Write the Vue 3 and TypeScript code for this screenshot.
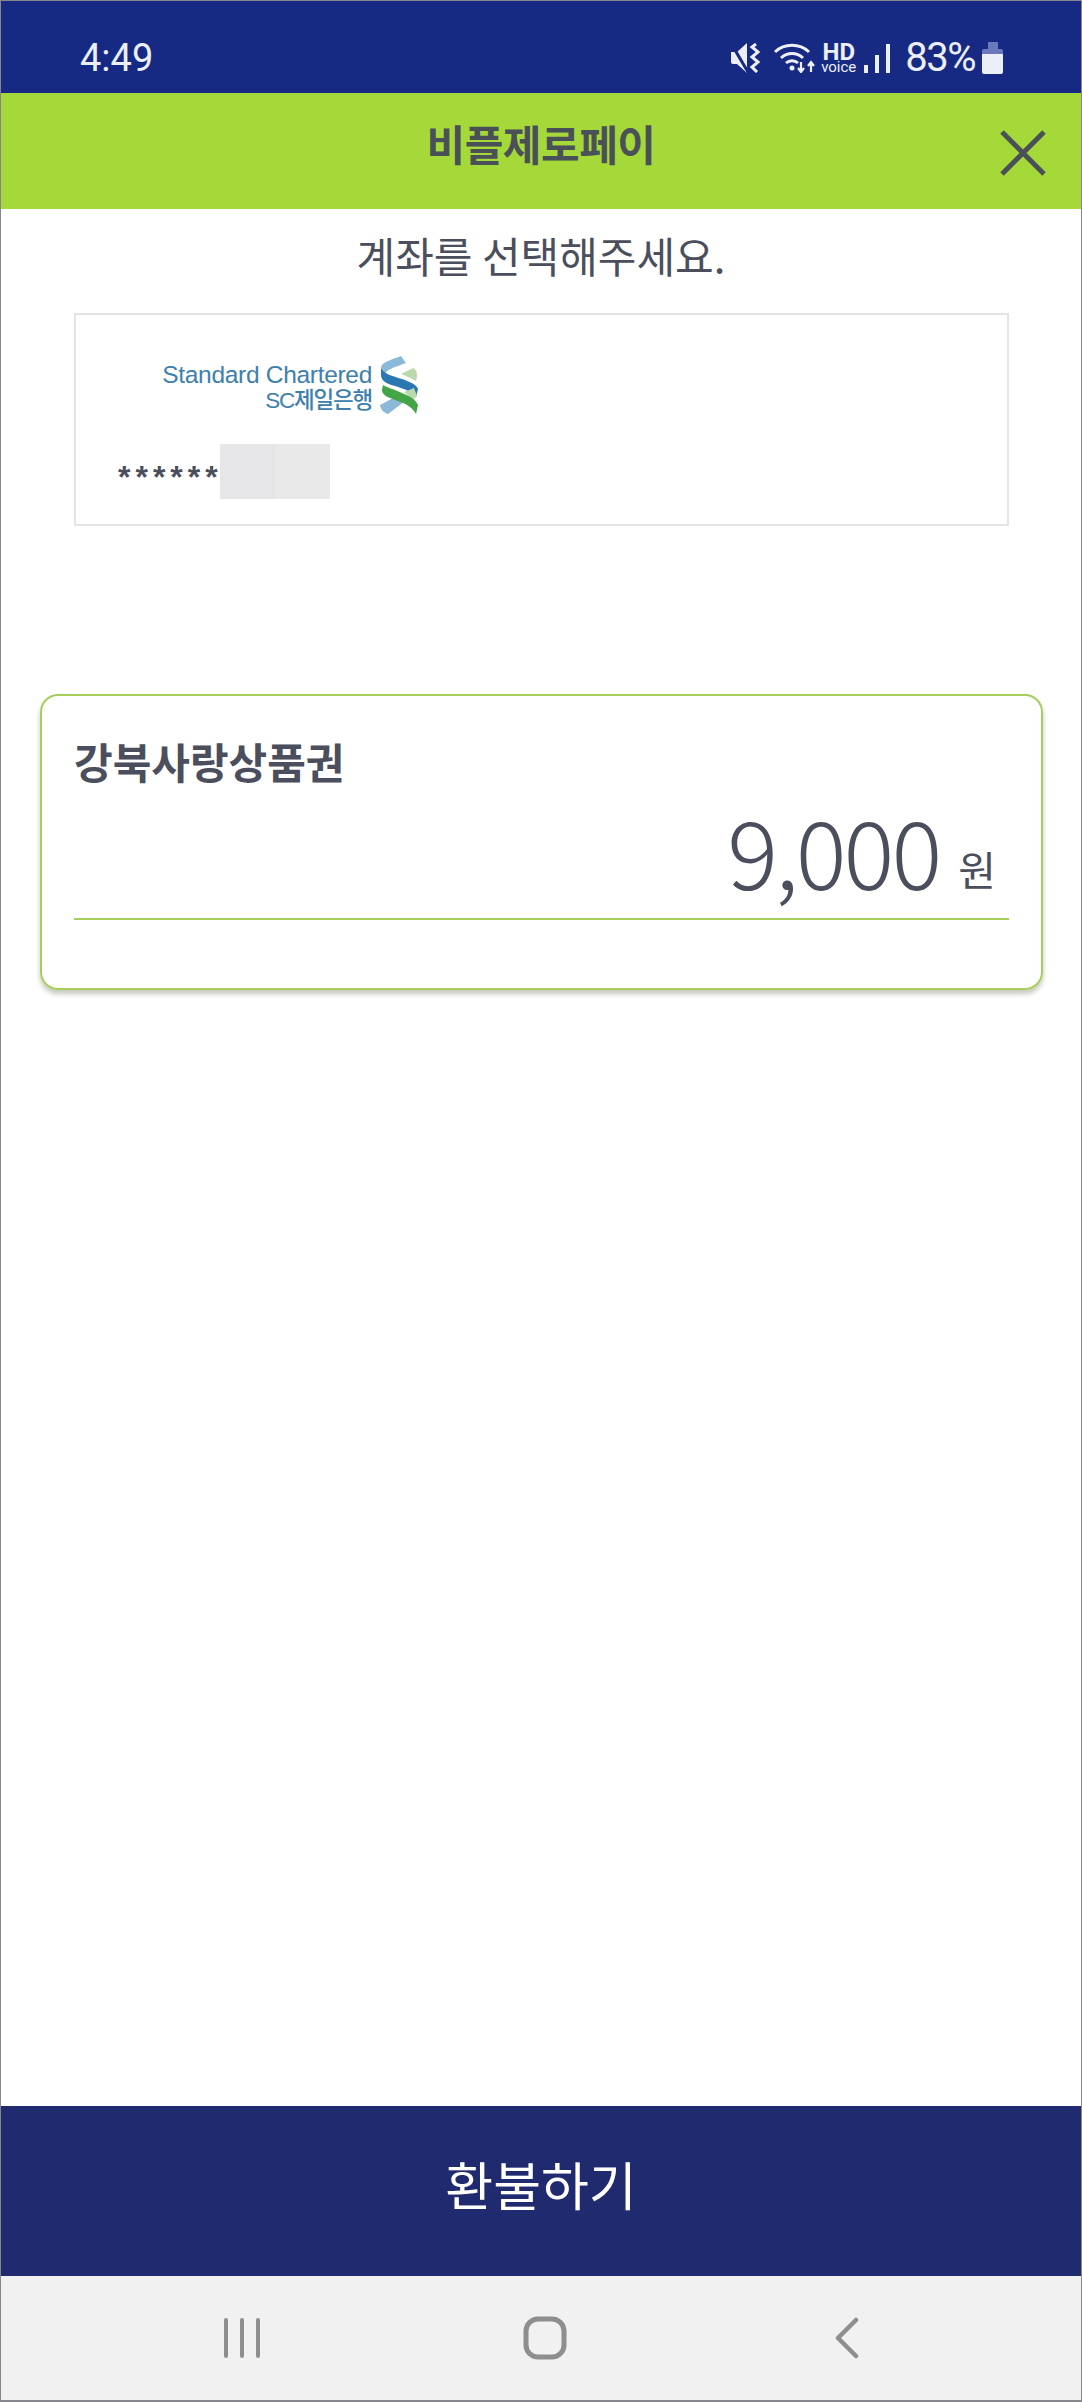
<script setup lang="ts">
const title = '비플제로페이'
const amount = '9,000'
</script>

<template>
  <div class="screen">
    <div class="status">
      <span class="clock">4:49</span>
      <div class="status-right">
        <svg class="ic-mute" width="32" height="30" viewBox="0 0 32 30">
          <path d="M0 9h6l10-9v30L6 21H2a2 2 0 0 1-2-2z" fill="#eceef8" />
          <path d="M1 2l16 27" stroke="#162a84" stroke-width="3" />
          <path d="M25 1l-4 3 6 5-6 5 6 5-6 5 5 5" fill="none" stroke="#eceef8" stroke-width="3" />
        </svg>
        <svg class="ic-wifi" width="42" height="30" viewBox="0 0 42 30">
          <path d="M1 9a25 25 0 0 1 34 0M7 15a16 16 0 0 1 22 0M12 20a9 9 0 0 1 12 0" fill="none" stroke="#eceef8" stroke-width="3" />
          <circle cx="18" cy="25" r="2.5" fill="#eceef8" />
          <path d="M27 19v9M24 25l3 4 3-4M37 29v-9M34 23l3-4 3 4" fill="none" stroke="#eceef8" stroke-width="2.2" />
        </svg>
        <div class="hd"><b>HD</b><span>voice</span></div>
        <div class="bars"><i class="b1"></i><i class="b2"></i><i class="b3"></i></div>
        <span class="pct">83%</span>
        <div class="batt"><i class="cap"></i><i class="body"></i></div>
      </div>
    </div>

    <header class="topbar">
      <h1>{{ title }}</h1>
      <svg class="close" width="46" height="46" viewBox="0 0 46 46">
        <path d="M2 2l42 42M44 2L2 44" stroke="#4a5058" stroke-width="5" fill="none" />
      </svg>
    </header>

    <main class="content">
      <p class="prompt">계좌를 선택해주세요.</p>

      <div class="account">
        <div class="logo">
          <div class="logo-text">
            <span class="en">Standard Chartered</span>
            <span class="ko">SC제일은행</span>
          </div>
          <svg width="38" height="58" viewBox="0 0 38 58">
            <path d="M21 0l5 7C18 10 10 12 5 17 2 14 0 12 2 9 5 5 14 3 21 0z" fill="#8db9d8" />
            <path d="M21 18l12-6c4 2 5 6 3 13-5-3-10-5-15-7z" fill="#bcd9ae" />
            <path d="M1 12c3 6 11 8 21 11 8 3 14 5 16 10l-2 8c-4-6-12-8-21-11C8 28 2 26 1 20z" fill="#2a77b2" />
            <path d="M24 36l10-4 3 8-4 4z" fill="#bcd9ae" />
            <path d="M0 49l15-8 9 5c-6 4-12 9-16 12-4-1-8-5-8-9z" fill="#8db9d8" />
            <path d="M3 29c5 3 11 4 19 8 8 3 14 7 16 12l-2 9c-4-7-10-10-18-13C10 42 2 40 2 34z" fill="#43a547" />
          </svg>
        </div>
        <div class="acct-no">
          <span class="stars">******</span>
          <i class="mask m1"></i><i class="mask m2"></i>
        </div>
      </div>

      <section class="card">
        <h2>강북사랑상품권</h2>
        <div class="amount-row">
          <span class="amount">{{ amount }}</span>
          <span class="unit">원</span>
        </div>
        <div class="rule"></div>
      </section>
    </main>

    <button class="refund">환불하기</button>

    <nav class="navbar">
      <svg width="40" height="40" viewBox="0 0 40 40">
        <path d="M3 2v36M19 2v36M35 2v36" stroke="#8e8e8e" stroke-width="4" stroke-linecap="round" />
      </svg>
      <svg width="44" height="44" viewBox="0 0 44 44">
        <rect x="3" y="3" width="38" height="38" rx="12" fill="none" stroke="#8e8e8e" stroke-width="5" />
      </svg>
      <svg width="28" height="42" viewBox="0 0 28 42">
        <path d="M23 3L5 21l18 18" fill="none" stroke="#8e8e8e" stroke-width="4.5" stroke-linecap="round" stroke-linejoin="round" />
      </svg>
    </nav>
  </div>
</template>

<style scoped>
.screen {
  width: 1082px;
  height: 2402px;
  box-sizing: border-box;
  border: 1px solid #85878c;
  border-width: 1px 1px 2px 1px;
  display: flex;
  flex-direction: column;
  background: #fff;
  overflow: hidden;
  font-family: "Noto Sans CJK KR", "Liberation Sans", sans-serif;
}
.status {
  height: 92px;
  flex: none;
  background: #162a84;
  display: flex;
  align-items: center;
  justify-content: space-between;
  padding: 22px 78px 0 79px;
  box-sizing: border-box;
  color: #eceef8;
  font-family: Roboto, sans-serif;
}
.clock {
  font-size: 38px;
  line-height: 1;
}
.status-right {
  display: flex;
  align-items: center;
}
.ic-wifi {
  margin-left: 11px;
}
.hd {
  display: flex;
  flex-direction: column;
  align-items: center;
  width: 33px;
  margin-left: 6px;
}
.hd b {
  font-size: 24px;
  line-height: 18px;
}
.hd span {
  font-size: 15px;
  line-height: 12px;
}
.bars {
  display: flex;
  align-items: flex-end;
  gap: 7px;
  height: 29px;
  margin-left: 9px;
}
.bars i {
  width: 4px;
  background: #eceef8;
}
.b1 { height: 8px; }
.b2 { height: 18px; }
.b3 { height: 29px; }
.pct {
  font-size: 40px;
  line-height: 1;
  margin-left: 15px;
  letter-spacing: -1.5px;
}
.batt {
  display: flex;
  flex-direction: column;
  align-items: center;
  width: 21px;
  margin-left: 7px;
}
.cap {
  width: 10px;
  height: 7px;
  background: #6a78bd;
}
.body {
  width: 21px;
  height: 25px;
  border-radius: 2px;
  background: linear-gradient(#6a78bd 0 5px, #eceef8 5px);
}
.topbar {
  height: 116px;
  flex: none;
  background: #a5d939;
  display: flex;
  justify-content: center;
  position: relative;
}
.topbar h1 {
  margin: 22px 0 0;
  font-size: 42px;
  line-height: 56px;
  font-weight: 700;
  color: #4a5058;
  letter-spacing: -0.5px;
}
.close {
  position: absolute;
  right: 35px;
  top: 37px;
}
.content {
  flex: 1;
  min-height: 0;
}
.prompt {
  margin: 21px 0 0;
  text-align: center;
  font-size: 42px;
  line-height: 50px;
  color: #4b4e5c;
}
.account {
  margin: 33px 72px 0 73px;
  height: 213px;
  box-sizing: border-box;
  border: 2px solid #e4e4e4;
  padding: 41px 0 0 42px;
}
.logo {
  display: flex;
  align-items: center;
  gap: 8px;
  margin-left: 44px;
}
.logo-text {
  display: flex;
  flex-direction: column;
  align-items: flex-end;
  width: 210px;
  margin-top: 6px;
  color: #3d80ad;
  font-family: "Liberation Sans", "Noto Sans CJK KR", sans-serif;
  line-height: 26px;
}
.en {
  font-size: 24.5px;
  letter-spacing: -0.3px;
  white-space: nowrap;
}
.ko {
  font-size: 22.5px;
  font-weight: 500;
  letter-spacing: -1.2px;
  white-space: nowrap;
}
.acct-no {
  display: flex;
  margin-top: 30px;
  height: 55px;
}
.stars {
  width: 102px;
  font-size: 32px;
  line-height: 55px;
  font-weight: 700;
  letter-spacing: 5px;
  color: #4b4e5c;
  font-family: "Liberation Sans", sans-serif;
  white-space: nowrap;
  padding-top: 6px;
  box-sizing: border-box;
}
.mask {
  height: 55px;
  width: 55px;
}
.m1 { background: #e6e6e8; }
.m2 { background: #e9e9ea; }
.card {
  margin: 168px 38px 0 39px;
  height: 296px;
  box-sizing: border-box;
  border: 2px solid #a5ce5c;
  border-radius: 18px;
  box-shadow: 0 4px 5px rgba(90, 100, 70, 0.35);
  padding: 40px 32px 0;
}
.card h2 {
  margin: 0;
  font-size: 42px;
  line-height: 50px;
  font-weight: 700;
  color: #4b4e5c;
}
.amount-row {
  display: flex;
  justify-content: flex-end;
  align-items: flex-end;
  gap: 19px;
  margin-top: 15px;
  padding-right: 13px;
  color: #4b4e5c;
}
.amount {
  font-size: 95px;
  line-height: 96px;
  font-weight: 300;
  letter-spacing: -3px;
}
.unit {
  font-size: 41px;
  line-height: 50px;
  font-weight: 400;
  margin-bottom: 4px;
}
.rule {
  height: 2px;
  background: #a5ce5c;
  margin-top: 21px;
}
.refund {
  display: block;
  flex: none;
  height: 170px;
  width: 100%;
  border: 0;
  padding: 0 0 15px;
  background: #202b6f;
  color: #fff;
  font-family: inherit;
  font-size: 52px;
  font-weight: 400;
}
.navbar {
  height: 124px;
  flex: none;
  background: #f1f1f1;
  display: grid;
  grid-template-columns: repeat(3, 302px);
  justify-content: center;
  justify-items: center;
  align-items: center;
  padding-left: 8px;
  box-sizing: border-box;
}
</style>

<style>
html,
body {
  margin: 0;
  background: #fff;
}
</style>
